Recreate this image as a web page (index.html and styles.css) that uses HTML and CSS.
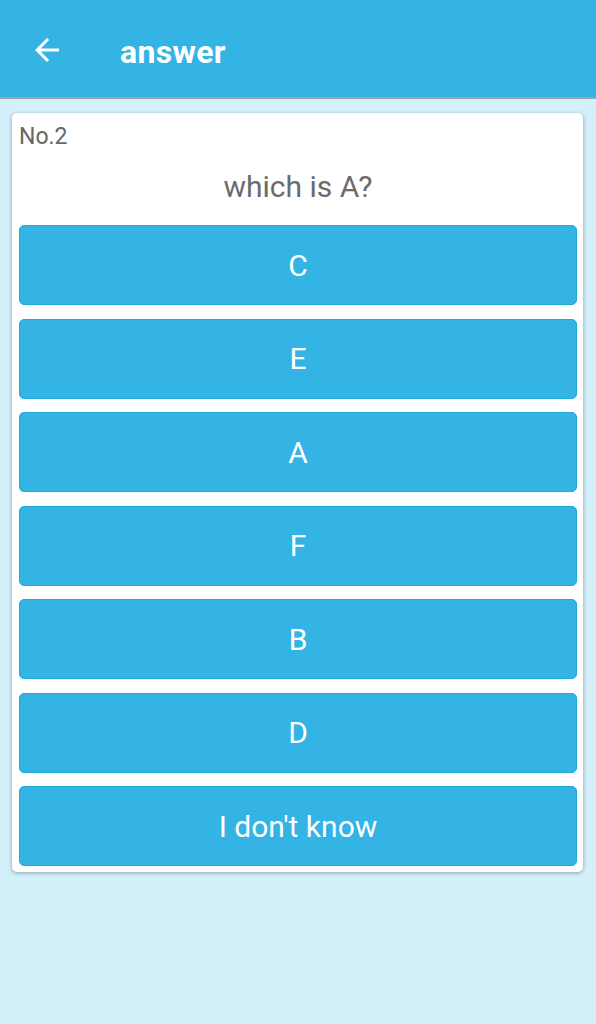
FILE: index.html
```html
<!DOCTYPE html>
<html>
<head>
<meta charset="utf-8">
<link rel="stylesheet" href="styles.css">
</head>
<body>
<header class="appbar">
  <svg class="back" viewBox="0 0 24 24" width="36" height="36"><path d="M20 11H7.83l5.59-5.59L12 4l-8 8 8 8 1.41-1.41L7.83 13H20v-2z" fill="#fff"/></svg>
  <h1 class="title">answer</h1>
</header>
<main class="content">
  <section class="card">
    <div class="num">No.2</div>
    <div class="question">which is A?</div>
    <div class="options">
      <button class="opt">C</button>
      <button class="opt">E</button>
      <button class="opt">A</button>
      <button class="opt">F</button>
      <button class="opt">B</button>
      <button class="opt">D</button>
      <button class="opt">I don't know</button>
    </div>
  </section>
</main>
</body>
</html>
```
FILE: styles.css
```css
html, body {
  margin: 0;
  padding: 0;
}
body {
  background: #d4f1fb;
  font-family: Roboto, "Liberation Sans", sans-serif;
  min-height: 1024px;
}
.appbar {
  height: 97px;
  background: #33b4e4;
  border-bottom: 2px solid #9aa4a8;
  display: flex;
  align-items: center;
  box-sizing: content-box;
}
.back {
  margin-left: 29px;
  margin-top: 2px;
}
.title {
  margin: 6px 0 0 55px;
  color: #fff;
  font-size: 32px;
  font-weight: 700;
  letter-spacing: 0.3px;
}
.content {
  padding: 14px 13px 0 12px;
}
.card {
  background: #fff;
  border-radius: 5px;
  box-shadow: 0 1px 4px rgba(0,0,0,0.35);
  padding: 10px 6px 6px 7px;
}
.num {
  color: #666;
  font-size: 23px;
  line-height: 28px;
}
.question {
  color: #6b6b6b;
  font-size: 30px;
  text-align: center;
  line-height: 40px;
  margin: 16px 0 18px 0;
}
.options {
  display: flex;
  flex-direction: column;
  gap: 13.5px;
}
.opt {
  height: 80px;
  background: #33b4e4;
  border: 1px solid #1fa9de;
  border-radius: 5px;
  color: #fff;
  font-family: Roboto, "Liberation Sans", sans-serif;
  font-size: 30px;
  padding: 0;
  margin: 0;
  width: 100%;
}
```
